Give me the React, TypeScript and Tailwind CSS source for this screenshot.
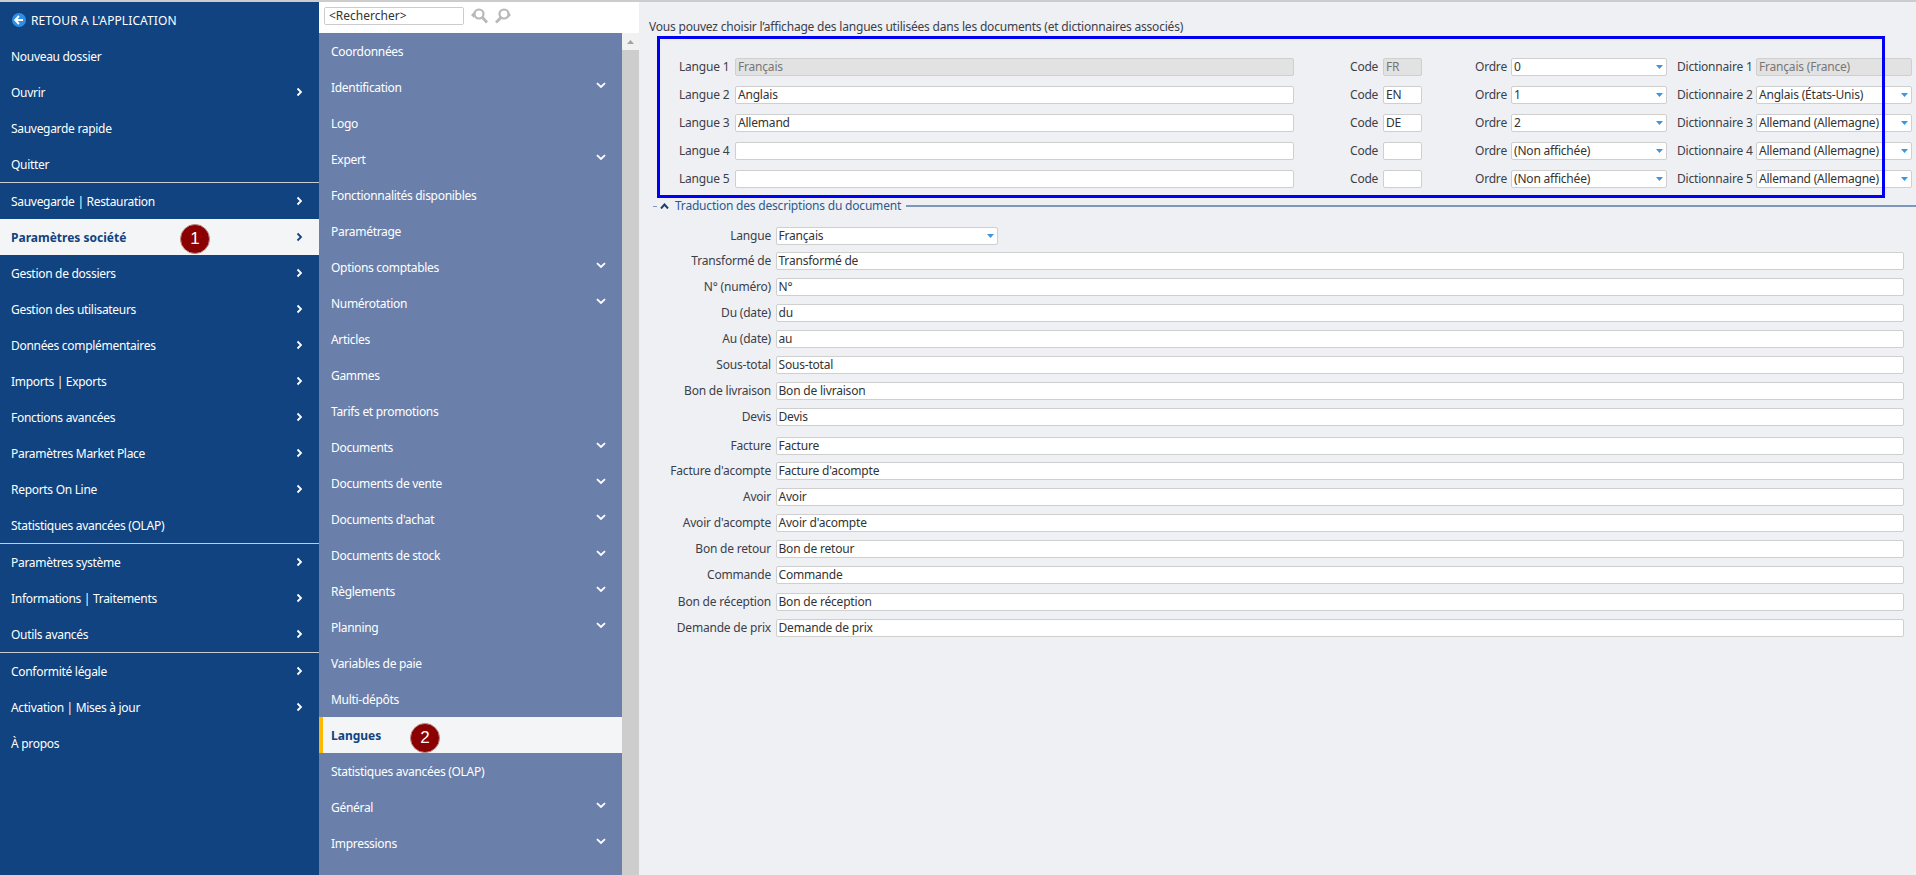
import { ReactNode } from "react";

const FONT = "font-['Noto_Sans',sans-serif]";

const ChevronRight = () => (
  <svg width="7" height="10" viewBox="0 0 7 10" className="shrink-0">
    <path d="M1.5 1.5 5 5 1.5 8.500" fill="none" stroke="currentColor" strokeWidth="1.8" />
  </svg>
);

const ChevronDown = () => (
  <svg width="10" height="7" viewBox="0 0 10 7" className="shrink-0 -mt-1">
    <path d="M1 1.200 5 5 9 1.200" fill="none" stroke="currentColor" strokeWidth="1.8" />
  </svg>
);

const Badge = ({ n, className }: { n: number; className: string }) => (
  <span
    className={`absolute flex h-[30px] w-[30px] items-center justify-center rounded-full border border-[#b98a8a] bg-[#8b0000] font-['Liberation_Sans',sans-serif] text-[17px] font-normal text-white ${className}`}
  >
    {n}
  </span>
);

type Item = { label: string; more?: boolean; active?: boolean; badge?: number };

const mainMenu: Item[][] = [
  [
    { label: "Nouveau dossier" },
    { label: "Ouvrir", more: true },
    { label: "Sauvegarde rapide" },
    { label: "Quitter" },
  ],
  [
    { label: "Sauvegarde | Restauration", more: true },
    { label: "Paramètres société", more: true, active: true, badge: 1 },
    { label: "Gestion de dossiers", more: true },
    { label: "Gestion des utilisateurs", more: true },
    { label: "Données complémentaires", more: true },
    { label: "Imports | Exports", more: true },
    { label: "Fonctions avancées", more: true },
    { label: "Paramètres Market Place", more: true },
    { label: "Reports On Line", more: true },
    { label: "Statistiques avancées (OLAP)" },
  ],
  [
    { label: "Paramètres système", more: true },
    { label: "Informations | Traitements", more: true },
    { label: "Outils avancés", more: true },
  ],
  [
    { label: "Conformité légale", more: true },
    { label: "Activation | Mises à jour", more: true },
    { label: "À propos" },
  ],
];

const subMenu: Item[] = [
  { label: "Coordonnées" },
  { label: "Identification", more: true },
  { label: "Logo" },
  { label: "Expert", more: true },
  { label: "Fonctionnalités disponibles" },
  { label: "Paramétrage" },
  { label: "Options comptables", more: true },
  { label: "Numérotation", more: true },
  { label: "Articles" },
  { label: "Gammes" },
  { label: "Tarifs et promotions" },
  { label: "Documents", more: true },
  { label: "Documents de vente", more: true },
  { label: "Documents d'achat", more: true },
  { label: "Documents de stock", more: true },
  { label: "Règlements", more: true },
  { label: "Planning", more: true },
  { label: "Variables de paie" },
  { label: "Multi-dépôts" },
  { label: "Langues", active: true, badge: 2 },
  { label: "Statistiques avancées (OLAP)" },
  { label: "Général", more: true },
  { label: "Impressions", more: true },
  { label: "Comptes" },
];

const languages = [
  { name: "Français", code: "FR", order: "0", dict: "Français (France)", locked: true },
  { name: "Anglais", code: "EN", order: "1", dict: "Anglais (États-Unis)" },
  { name: "Allemand", code: "DE", order: "2", dict: "Allemand (Allemagne)" },
  { name: "", code: "", order: "(Non affichée)", dict: "Allemand (Allemagne)" },
  { name: "", code: "", order: "(Non affichée)", dict: "Allemand (Allemagne)" },
];

const translations = [
  { label: "Transformé de", value: "Transformé de", cls: "mt-[7px]" },
  { label: "N° (numéro)", value: "N°", cls: "mt-2" },
  { label: "Du (date)", value: "du", cls: "mt-2" },
  { label: "Au (date)", value: "au", cls: "mt-2" },
  { label: "Sous-total", value: "Sous-total", cls: "mt-2" },
  { label: "Bon de livraison", value: "Bon de livraison", cls: "mt-2" },
  { label: "Devis", value: "Devis", cls: "mt-2" },
  { label: "Facture", value: "Facture", cls: "mt-[11px]" },
  { label: "Facture d'acompte", value: "Facture d'acompte", cls: "mt-[7px]" },
  { label: "Avoir", value: "Avoir", cls: "mt-2" },
  { label: "Avoir d'acompte", value: "Avoir d'acompte", cls: "mt-2" },
  { label: "Bon de retour", value: "Bon de retour", cls: "mt-2" },
  { label: "Commande", value: "Commande", cls: "mt-2" },
  { label: "Bon de réception", value: "Bon de réception", cls: "mt-[9px]" },
  { label: "Demande de prix", value: "Demande de prix", cls: "mt-2" },
];

const Field = ({ value, locked, className }: { value: string; locked?: boolean; className: string }) => (
  <div
    className={`flex h-[18px] shrink-0 items-center rounded-[2px] border border-[#cfcfcf] pl-[2px] ${
      locked ? "bg-[#e2e2e2] text-[#777]" : "bg-white text-[#333]"
    } ${className}`}
  >
    {value}
  </div>
);

const Select = ({ value, locked, className }: { value: string; locked?: boolean; className: string }) => (
  <div
    className={`flex h-[18px] shrink-0 items-center justify-between rounded-[2px] border border-[#cfcfcf] pl-[2px] pr-[3px] ${
      locked ? "bg-[#e2e2e2] text-[#777]" : "bg-white text-[#333]"
    } ${className}`}
  >
    <span>{value}</span>
    {!locked && (
      <svg width="7" height="4" viewBox="0 0 7 4">
        <path d="M0 0h7L3.500 4z" fill="#3a96e0" />
      </svg>
    )}
  </div>
);

const Row = ({ item, sub }: { item: Item; sub?: boolean }): ReactNode => (
  <div
    className={`relative flex h-9 shrink-0 items-center justify-between ${
      item.active ? "bg-[#f4f5f7] font-bold tracking-normal text-[#10437f]" : "tracking-[-0.3px] text-white"
    } ${sub ? "pl-3 pr-4" : "pl-[11px] pr-4"} ${sub && item.active ? "border-l-[4px] border-[#fdb900] !pl-2" : ""}`}
  >
    <span className="pt-[2px]">{item.label}</span>
    {item.more && (sub ? <ChevronDown /> : <ChevronRight />)}
    {item.badge === 1 && <Badge n={1} className="left-[180px] top-[5px]" />}
    {item.badge === 2 && <Badge n={2} className="left-[87px] top-[6px]" />}
  </div>
);

export default function App() {
  return (
    <div className={`${FONT} flex h-[875px] w-[1916px] overflow-hidden border-t-2 border-[#cccccc] bg-[#eff0f4] text-[12px] tracking-[-0.2px] text-[#3c4049]`}>
      {/* Main menu */}
      <nav className="flex w-[319px] shrink-0 flex-col bg-[#10437f]">
        <div className="flex h-9 shrink-0 items-center gap-[5px] pl-3 tracking-[0.1px] text-white">
          <svg width="14" height="14" viewBox="0 0 14 14">
            <circle cx="7" cy="7" r="7" fill="#2f8fe6" />
            <path d="M7 3 3.200 7 7 11M3.500 7H11" fill="none" stroke="#fff" strokeWidth="1.900" />
          </svg>
          <span className="pt-[2px]">RETOUR A L'APPLICATION</span>
        </div>
        {mainMenu.map((group, i) => (
          <div key={i} className={i > 0 ? "border-t border-[#c9ccd2]" : ""}>
            {group.map((item) => (
              <Row key={item.label} item={item} />
            ))}
          </div>
        ))}
      </nav>

      {/* Sub menu */}
      <div className="flex w-[320px] shrink-0 flex-col">
        <div className="flex h-[31px] shrink-0 items-center gap-[6px] bg-white pb-[3px] pl-[5px]">
          <div className="flex h-[18px] w-[140px] items-center rounded-[2px] border border-[#cccccc] pl-1 tracking-normal text-[#333]">
            &lt;Rechercher&gt;
          </div>
          <svg width="18" height="16" viewBox="0 0 18 16" className="text-[#b8b8b8]">
            <circle cx="9" cy="6" r="4.500" fill="none" stroke="currentColor" strokeWidth="2.200" />
            <path d="M12.500 9.500 17 14.500" stroke="currentColor" strokeWidth="2.800" />
            <path d="M1 7l3-3v6z" fill="currentColor" />
          </svg>
          <svg width="18" height="16" viewBox="0 0 18 16" className="text-[#b8b8b8]">
            <circle cx="10" cy="6" r="4.500" fill="none" stroke="currentColor" strokeWidth="2.200" />
            <path d="M7 9.500 2 14.500" stroke="currentColor" strokeWidth="2.800" />
            <path d="M17 7l-3-3v6z" fill="currentColor" />
          </svg>
        </div>
        <div className="flex min-h-0 flex-1">
          <div className="flex w-[303px] flex-col overflow-hidden bg-[#6a80ab]">
            {subMenu.map((item) => (
              <Row key={item.label} item={item} sub />
            ))}
          </div>
          <div className="flex w-[17px] flex-col bg-[#cdcdcd]">
            <div className="flex h-[17px] items-center justify-center bg-[#f1f1f1]">
              <svg width="7" height="4" viewBox="0 0 7 4">
                <path d="M3.500 0 7 4H0z" fill="#a3a3a3" />
              </svg>
            </div>
          </div>
        </div>
      </div>

      {/* Content */}
      <main className="relative min-w-0 flex-1">
        <p className="pl-[10px] pt-[17px] leading-[16px]">
          Vous pouvez choisir l’affichage des langues utilisées dans les documents (et dictionnaires associés)
        </p>

        <div className="mt-[23px] flex flex-col gap-[10px]">
          {languages.map((l, i) => (
            <div key={i} className="flex items-center">
              <span className="w-[96px] shrink-0 pl-10">Langue {i + 1}</span>
              <Field value={l.name} locked={l.locked} className="w-[559px]" />
              <span className="ml-[56px] w-[33px] shrink-0">Code</span>
              <Field value={l.code} locked={l.locked} className="w-[39px]" />
              <span className="ml-[53px] w-[36px] shrink-0">Ordre</span>
              <Select value={l.order} className="w-[156px]" />
              <span className="ml-[10px] w-[79px] shrink-0">Dictionnaire {i + 1}</span>
              <Select value={l.dict} locked={l.locked} className="w-[156px]" />
            </div>
          ))}
        </div>

        {/* Fieldset title */}
        <div className="mt-[11px] flex h-[14px] items-center pl-[14px] text-[#2c5a8f]">
          <span className="h-[1px] w-[4px] bg-[#7e97bd]" />
          <svg width="9" height="6" viewBox="0 0 9 6" className="ml-[3px] mr-[6px] text-[#1d3f70]">
            <path d="M1 5.500 4.500 1.500 8 5.500" fill="none" stroke="currentColor" strokeWidth="2" />
          </svg>
          <span>Traduction des descriptions du document</span>
          <span className="ml-[5px] h-[2px] flex-1 bg-[#7e97bd]" />
        </div>

        <div className="mt-[14px] flex items-center">
          <span className="w-[132px] shrink-0 text-right">Langue</span>
          <Select value="Français" className="ml-[4.500px] w-[222px]" />
        </div>

        <div>
          {translations.map((t) => (
            <div key={t.label} className={`flex items-center ${t.cls}`}>
              <span className="w-[132px] shrink-0 text-right">{t.label}</span>
              <Field value={t.value} className="ml-[4.500px] w-[1128px]" />
            </div>
          ))}
        </div>
      </main>

      {/* Annotation frame */}
      <div className="pointer-events-none absolute left-[657px] top-[36px] h-[162px] w-[1228px] border-[3px] border-[#0000f5]" />
    </div>
  );
}
